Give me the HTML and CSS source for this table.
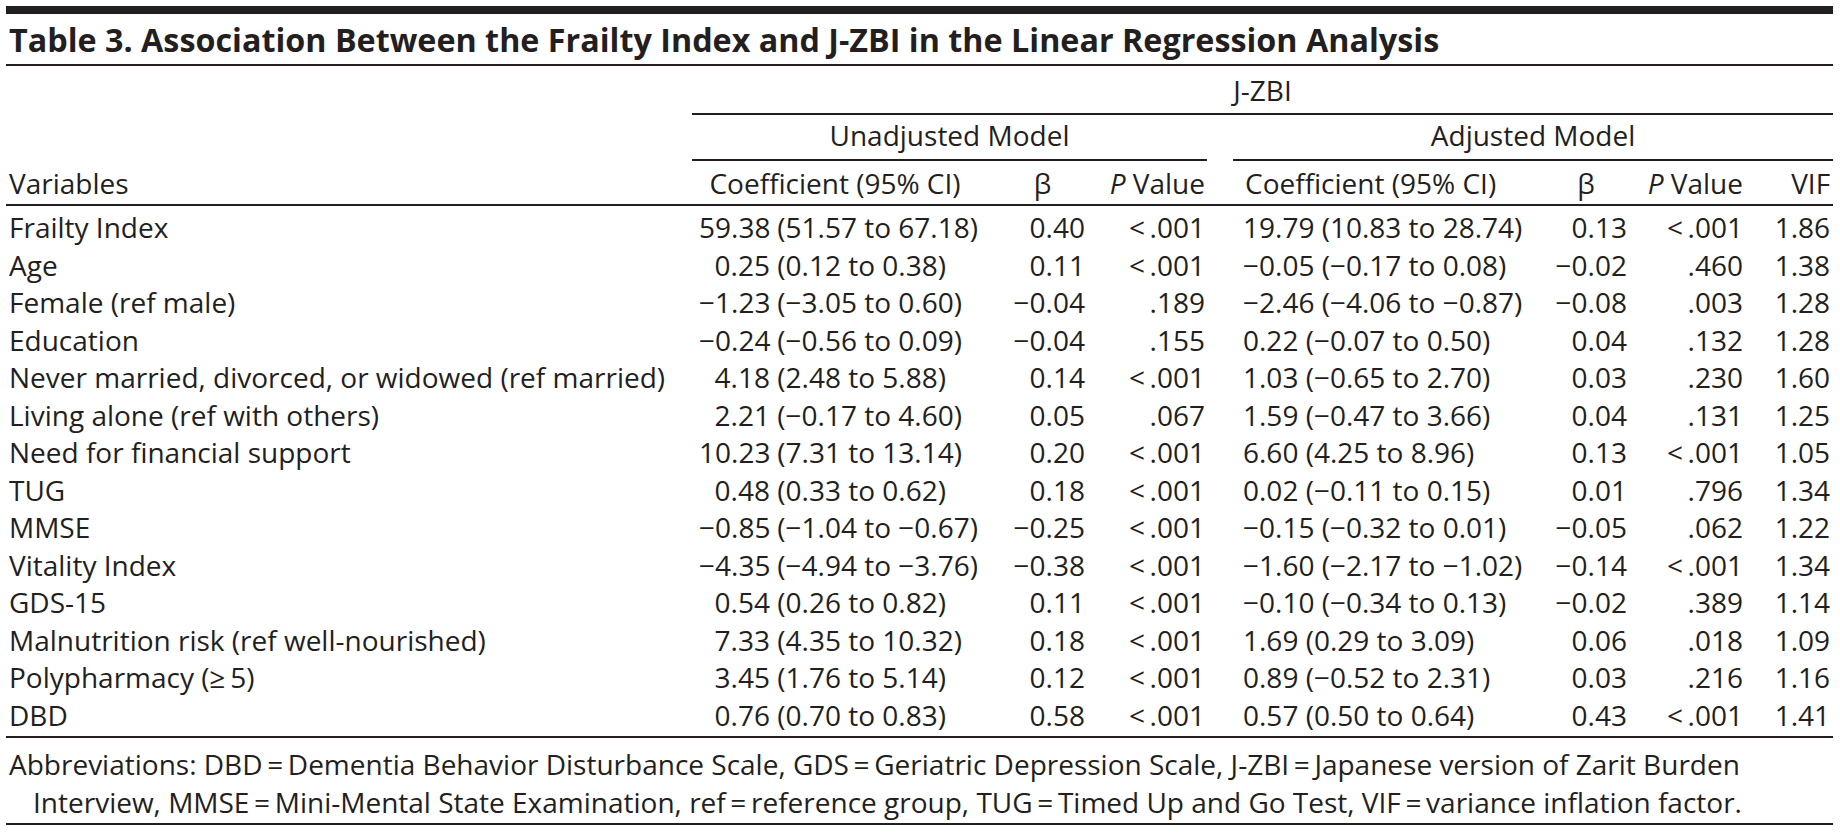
FILE: index.html
```html
<!DOCTYPE html>
<html lang="en">
<head>
<meta charset="utf-8">
<title>Table 3</title>
<link rel="stylesheet" href="styles.css">
</head>
<body>
<div class="page">
  <div class="topbar"></div>
  <h1 class="title">Table 3. Association Between the Frailty Index and J-ZBI in the Linear Regression Analysis</h1>
  <table class="reg">
    <colgroup>
      <col class="c-var"><col class="c-coef"><col class="c-beta"><col class="c-p"><col class="c-gap"><col class="c-coef2"><col class="c-beta2"><col class="c-p2"><col class="c-vif">
    </colgroup>
    <thead>
      <tr class="h1">
        <th></th>
        <th colspan="8" class="grp">J-ZBI</th>
      </tr>
      <tr class="h2">
        <th></th>
        <th colspan="3" class="grp">Unadjusted Model</th>
        <th></th>
        <th colspan="4" class="grp">Adjusted Model</th>
      </tr>
      <tr class="h3">
        <th class="var">Variables</th>
        <th class="coef">Coefficient (95% CI)</th>
        <th class="beta">β</th>
        <th class="p"><i>P</i> Value</th>
        <th class="gap"></th>
        <th class="coef2">Coefficient (95% CI)</th>
        <th class="beta2">β</th>
        <th class="p2"><i>P</i> Value</th>
        <th class="vif">VIF</th>
      </tr>
    </thead>
    <tbody>
      <tr><td class="var">Frailty Index</td><td class="coef"><span class="est">59.38</span> (51.57 to 67.18)</td><td class="beta">0.40</td><td class="p">&lt;&#8201;.001</td><td class="gap"></td><td class="coef2">19.79 (10.83 to 28.74)</td><td class="beta2">0.13</td><td class="p2">&lt;&#8201;.001</td><td class="vif">1.86</td></tr>
      <tr><td class="var">Age</td><td class="coef"><span class="est">0.25</span> (0.12 to 0.38)</td><td class="beta">0.11</td><td class="p">&lt;&#8201;.001</td><td class="gap"></td><td class="coef2">−0.05 (−0.17 to 0.08)</td><td class="beta2">−0.02</td><td class="p2">.460</td><td class="vif">1.38</td></tr>
      <tr><td class="var">Female (ref male)</td><td class="coef"><span class="est">−1.23</span> (−3.05 to 0.60)</td><td class="beta">−0.04</td><td class="p">.189</td><td class="gap"></td><td class="coef2">−2.46 (−4.06 to −0.87)</td><td class="beta2">−0.08</td><td class="p2">.003</td><td class="vif">1.28</td></tr>
      <tr><td class="var">Education</td><td class="coef"><span class="est">−0.24</span> (−0.56 to 0.09)</td><td class="beta">−0.04</td><td class="p">.155</td><td class="gap"></td><td class="coef2">0.22 (−0.07 to 0.50)</td><td class="beta2">0.04</td><td class="p2">.132</td><td class="vif">1.28</td></tr>
      <tr><td class="var">Never married, divorced, or widowed (ref married)</td><td class="coef"><span class="est">4.18</span> (2.48 to 5.88)</td><td class="beta">0.14</td><td class="p">&lt;&#8201;.001</td><td class="gap"></td><td class="coef2">1.03 (−0.65 to 2.70)</td><td class="beta2">0.03</td><td class="p2">.230</td><td class="vif">1.60</td></tr>
      <tr><td class="var">Living alone (ref with others)</td><td class="coef"><span class="est">2.21</span> (−0.17 to 4.60)</td><td class="beta">0.05</td><td class="p">.067</td><td class="gap"></td><td class="coef2">1.59 (−0.47 to 3.66)</td><td class="beta2">0.04</td><td class="p2">.131</td><td class="vif">1.25</td></tr>
      <tr><td class="var">Need for financial support</td><td class="coef"><span class="est">10.23</span> (7.31 to 13.14)</td><td class="beta">0.20</td><td class="p">&lt;&#8201;.001</td><td class="gap"></td><td class="coef2">6.60 (4.25 to 8.96)</td><td class="beta2">0.13</td><td class="p2">&lt;&#8201;.001</td><td class="vif">1.05</td></tr>
      <tr><td class="var">TUG</td><td class="coef"><span class="est">0.48</span> (0.33 to 0.62)</td><td class="beta">0.18</td><td class="p">&lt;&#8201;.001</td><td class="gap"></td><td class="coef2">0.02 (−0.11 to 0.15)</td><td class="beta2">0.01</td><td class="p2">.796</td><td class="vif">1.34</td></tr>
      <tr><td class="var">MMSE</td><td class="coef"><span class="est">−0.85</span> (−1.04 to −0.67)</td><td class="beta">−0.25</td><td class="p">&lt;&#8201;.001</td><td class="gap"></td><td class="coef2">−0.15 (−0.32 to 0.01)</td><td class="beta2">−0.05</td><td class="p2">.062</td><td class="vif">1.22</td></tr>
      <tr><td class="var">Vitality Index</td><td class="coef"><span class="est">−4.35</span> (−4.94 to −3.76)</td><td class="beta">−0.38</td><td class="p">&lt;&#8201;.001</td><td class="gap"></td><td class="coef2">−1.60 (−2.17 to −1.02)</td><td class="beta2">−0.14</td><td class="p2">&lt;&#8201;.001</td><td class="vif">1.34</td></tr>
      <tr><td class="var">GDS-15</td><td class="coef"><span class="est">0.54</span> (0.26 to 0.82)</td><td class="beta">0.11</td><td class="p">&lt;&#8201;.001</td><td class="gap"></td><td class="coef2">−0.10 (−0.34 to 0.13)</td><td class="beta2">−0.02</td><td class="p2">.389</td><td class="vif">1.14</td></tr>
      <tr><td class="var">Malnutrition risk (ref well-nourished)</td><td class="coef"><span class="est">7.33</span> (4.35 to 10.32)</td><td class="beta">0.18</td><td class="p">&lt;&#8201;.001</td><td class="gap"></td><td class="coef2">1.69 (0.29 to 3.09)</td><td class="beta2">0.06</td><td class="p2">.018</td><td class="vif">1.09</td></tr>
      <tr><td class="var">Polypharmacy (≥&#8201;5)</td><td class="coef"><span class="est">3.45</span> (1.76 to 5.14)</td><td class="beta">0.12</td><td class="p">&lt;&#8201;.001</td><td class="gap"></td><td class="coef2">0.89 (−0.52 to 2.31)</td><td class="beta2">0.03</td><td class="p2">.216</td><td class="vif">1.16</td></tr>
      <tr><td class="var">DBD</td><td class="coef"><span class="est">0.76</span> (0.70 to 0.83)</td><td class="beta">0.58</td><td class="p">&lt;&#8201;.001</td><td class="gap"></td><td class="coef2">0.57 (0.50 to 0.64)</td><td class="beta2">0.43</td><td class="p2">&lt;&#8201;.001</td><td class="vif">1.41</td></tr>
    </tbody>
  </table>
  <p class="notes">Abbreviations: DBD&#8201;=&#8201;Dementia Behavior Disturbance Scale, GDS&#8201;=&#8201;Geriatric Depression Scale, J-ZBI&#8201;=&#8201;Japanese version of Zarit Burden<br>Interview, MMSE&#8201;=&#8201;Mini-Mental State Examination, ref&#8201;=&#8201;reference group, TUG&#8201;=&#8201;Timed Up and Go Test, VIF&#8201;=&#8201;variance inflation factor.</p>
</div>
</body>
</html>
```

FILE: styles.css
```css
html, body {
  margin: 0;
  padding: 0;
  background: #ffffff;
}

body {
  color: #231f20;
  font-family: "Open Sans", "Noto Sans", "Liberation Sans", sans-serif;
}

.page {
  width: 1827px;
  padding: 6px 7px 0 6px;
}

.topbar {
  height: 8px;
  background: #231f20;
}

.title {
  margin: 0;
  padding-left: 3px;
  font-size: 32.3px;
  font-weight: 700;
  line-height: 50px;
  white-space: nowrap;
  border-bottom: 2px solid #231f20;
}

.reg {
  width: 1827px;
  table-layout: fixed;
  border-collapse: separate;
  border-spacing: 0;
  font-size: 28px;
  line-height: 37.5px;
}

.reg th,
.reg td {
  padding: 0;
  font-weight: 400;
  white-space: nowrap;
  vertical-align: top;
}

.c-var { width: 686px; }
.c-coef { width: 308px; }
.c-beta { width: 90px; }
.c-p { width: 117px; }
.c-gap { width: 26px; }
.c-coef2 { width: 312px; }
.c-beta2 { width: 89px; }
.c-p2 { width: 111px; }
.c-vif { width: 88px; }

/* header rows */
.h1 .grp {
  padding: 6px 0 3.5px;
  text-align: center;
  border-bottom: 2px solid #231f20;
}

.h2 .grp {
  padding: 2px 0 4.5px;
  text-align: center;
  border-bottom: 2px solid #231f20;
}

.h3 th {
  padding-top: 3.5px;
  padding-bottom: 2px;
  border-bottom: 2px solid #231f20;
}

.h3 .var { text-align: left; padding-left: 3px; }
.h3 .coef { text-align: center; padding-right: 22px; }
.h3 .beta { text-align: center; padding-right: 5px; }
.h3 .p { text-align: right; padding-right: 2px; }
.h3 .coef2 { text-align: left; padding-left: 12px; }
.h3 .beta2 { text-align: center; padding-right: 7px; }
.h3 .p2 { text-align: right; padding-right: 2px; }
.h3 .vif { text-align: right; padding-right: 3px; }

/* body cells */
.reg td.var { padding-left: 3px; text-align: left; }
.reg td.coef { padding-left: 7px; text-align: left; }
.reg td.coef2 { padding-left: 10px; text-align: left; }
.reg td.beta { text-align: right; padding-right: 5px; }
.reg td.p { text-align: right; padding-right: 2px; }
.reg td.beta2 { text-align: right; padding-right: 7px; }
.reg td.p2 { text-align: right; padding-right: 2px; }
.reg td.vif { text-align: right; padding-right: 3px; }

.est {
  display: inline-block;
  width: 71px;
  text-align: right;
}

.reg tbody tr:first-child td {
  padding-top: 3px;
}

.reg tbody tr:last-child td {
  padding-bottom: 2px;
  border-bottom: 2px solid #231f20;
}

.notes {
  margin: 0;
  padding: 8px 0 1.75px 27px;
  text-indent: -24px;
  font-size: 28px;
  line-height: 37.5px;
  white-space: nowrap;
  border-bottom: 2px solid #231f20;
}
```
